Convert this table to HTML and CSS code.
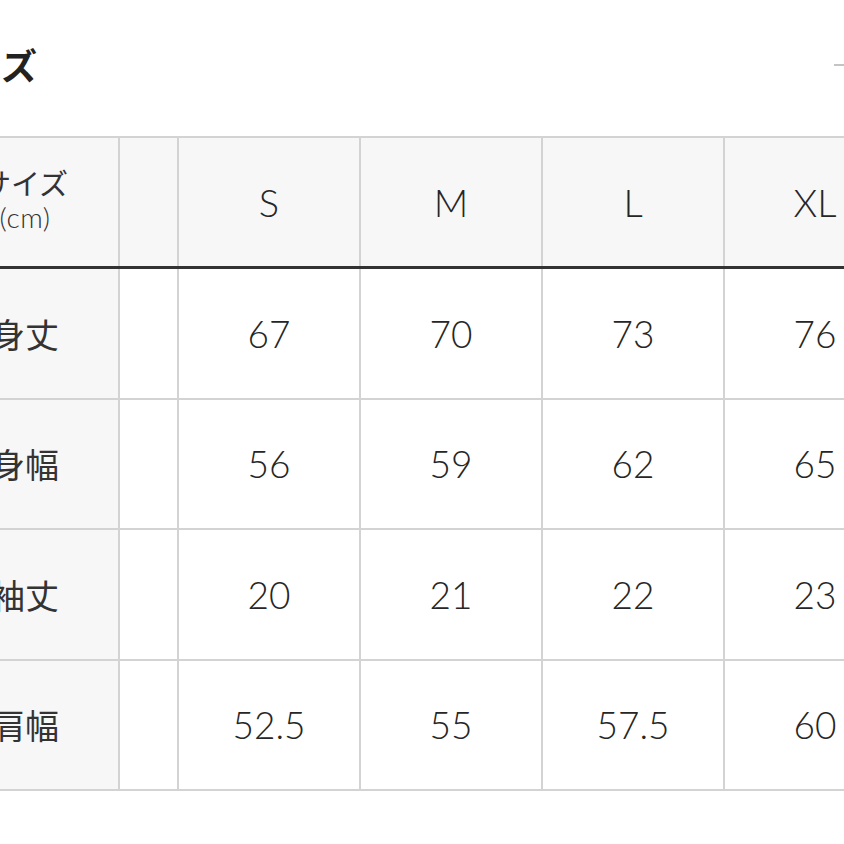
FILE: index.html
```html
<!DOCTYPE html>
<html lang="ja">
<head>
<meta charset="utf-8">
<link rel="stylesheet" href="styles.css">
</head>
<body>
<div class="page">
  <div class="head">
    <h2 class="title">サイズ</h2>
    <span class="toggle"></span>
  </div>
  <table class="sizes">
    <colgroup>
      <col class="c-label"><col class="c-gap"><col class="c-val"><col class="c-val"><col class="c-val"><col class="c-val">
    </colgroup>
    <thead>
      <tr>
        <th class="label"><span class="jp">サイズ</span><span class="unit">(cm)</span></th>
        <th class="gap"></th>
        <th>S</th><th>M</th><th>L</th><th>XL</th>
      </tr>
    </thead>
    <tbody>
      <tr><th class="label">身丈</th><td class="gap"></td><td>67</td><td>70</td><td>73</td><td>76</td></tr>
      <tr><th class="label">身幅</th><td class="gap"></td><td>56</td><td>59</td><td>62</td><td>65</td></tr>
      <tr><th class="label">袖丈</th><td class="gap"></td><td>20</td><td>21</td><td>22</td><td>23</td></tr>
      <tr><th class="label">肩幅</th><td class="gap"></td><td>52.5</td><td>55</td><td>57.5</td><td>60</td></tr>
    </tbody>
  </table>
</div>
</body>
</html>
```

FILE: styles.css
```css
html, body {
  margin: 0;
  padding: 0;
  background: #ffffff;
  overflow: hidden;
}
body {
  width: 844px;
  height: 844px;
}
.page {
  margin-left: -70px;
  width: 1000px;
  color: #333333;
  font-family: "Lato", "Noto Sans CJK JP", sans-serif;
}
.head {
  display: flex;
  align-items: center;
  justify-content: space-between;
  height: 130px;
  padding-bottom: 3px;
  box-sizing: border-box;
}
.title {
  margin: 0;
  font-family: "Noto Sans CJK JP", sans-serif;
  font-weight: 700;
  font-size: 36px;
  line-height: 40px;
  color: #222222;
  letter-spacing: 0;
}
.toggle {
  display: block;
  width: 16px;
  height: 2px;
  background: #c4c4c4;
  margin-right: 80px;
  margin-top: 3px;
}
.sizes {
  border-collapse: collapse;
  table-layout: fixed;
  width: 976px;
  margin-top: 6px;
}
.c-label { width: 188px; }
.c-gap { width: 59px; }
.c-val { width: 182px; }
.sizes th, .sizes td {
  border: 2px solid #d3d3d3;
  text-align: center;
  vertical-align: middle;
  padding: 0;
  font-weight: 300;
  font-size: 37px;
  color: #262626;
}
.sizes thead th {
  height: 128px;
  background: #f7f7f7;
  border-bottom: 3px solid #333333;
  font-size: 38px;
}
.sizes tbody th, .sizes tbody td {
  height: 128.5px;
}
.sizes .label {
  background: #f7f7f7;
  font-family: "Noto Sans CJK JP", sans-serif;
  font-size: 34px;
  font-weight: 400;
  color: #333333;
}
.sizes tbody .gap {
  background: #ffffff;
}
.sizes thead .label {
  font-size: 29px;
  line-height: 35px;
}
.jp {
  display: block;
  margin-top: -4px;
}
.unit {
  display: block;
  font-family: "Lato", sans-serif;
  font-weight: 300;
  font-size: 28px;
  letter-spacing: 0.5px;
}
```
